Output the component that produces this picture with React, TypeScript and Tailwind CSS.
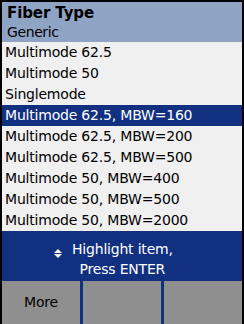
const items = [
  'Multimode 62.5',
  'Multimode 50',
  'Singlemode',
  'Multimode 62.5, MBW=160',
  'Multimode 62.5, MBW=200',
  'Multimode 62.5, MBW=500',
  'Multimode 50, MBW=400',
  'Multimode 50, MBW=500',
  'Multimode 50, MBW=2000',
];

const selected = 3;

function UpDownIcon() {
  return (
    <svg width="8" height="9" viewBox="0 0 8 9" className="shrink-0 mt-[10px]">
      <path d="M4 0 L8 4 L0 4 Z" fill="white" />
      <path d="M0 5 L8 5 L4 9 Z" fill="white" />
    </svg>
  );
}

export default function App() {
  return (
    <div
      className="w-[244px] h-[324px] bg-black pl-[2px] pt-[2px] pr-[2px] flex flex-col overflow-hidden"
      style={{ fontFamily: '"DejaVu Sans", Verdana, sans-serif' }}
    >
      {/* header */}
      <div className="h-[40px] bg-[#8fa3c4] pl-[5px] pt-[1px] flex flex-col text-black">
        <div className="h-[20px] leading-[20px] text-[15px] font-bold tracking-[-0.1px]">Fiber Type</div>
        <div className="h-[19px] leading-[19px] text-[14px] tracking-[-0.4px]">Generic</div>
      </div>

      {/* list */}
      <div className="bg-[#f0f0f0] flex flex-col">
        {items.map((label, i) => (
          <div
            key={label}
            className={`h-[21px] leading-[21px] pl-[3px] text-[14px] tracking-[-0.2px] whitespace-nowrap ${
              i === selected ? 'bg-[#11307f] text-white' : 'text-black'
            }`}
          >
            {label}
          </div>
        ))}
      </div>

      {/* prompt */}
      <div className="h-[50px] bg-[#11307f] flex items-start pl-[52px] pt-[8px] gap-[10px] text-white text-[14px] tracking-[-0.2px]">
        <UpDownIcon />
        <div className="flex flex-col items-center leading-[20px]">
          <span>Highlight item,</span>
          <span>Press ENTER</span>
        </div>
      </div>

      {/* soft keys */}
      <div className="flex-1 bg-[#11307f] flex gap-[3px]">
        <div className="flex-1 bg-[#8f8f8f] pt-[11px] text-center leading-[21px] text-[14px] tracking-[-0.2px] text-black">
          More
        </div>
        <div className="flex-1 bg-[#8f8f8f]" />
        <div className="flex-1 bg-[#8f8f8f]" />
      </div>
    </div>
  );
}
